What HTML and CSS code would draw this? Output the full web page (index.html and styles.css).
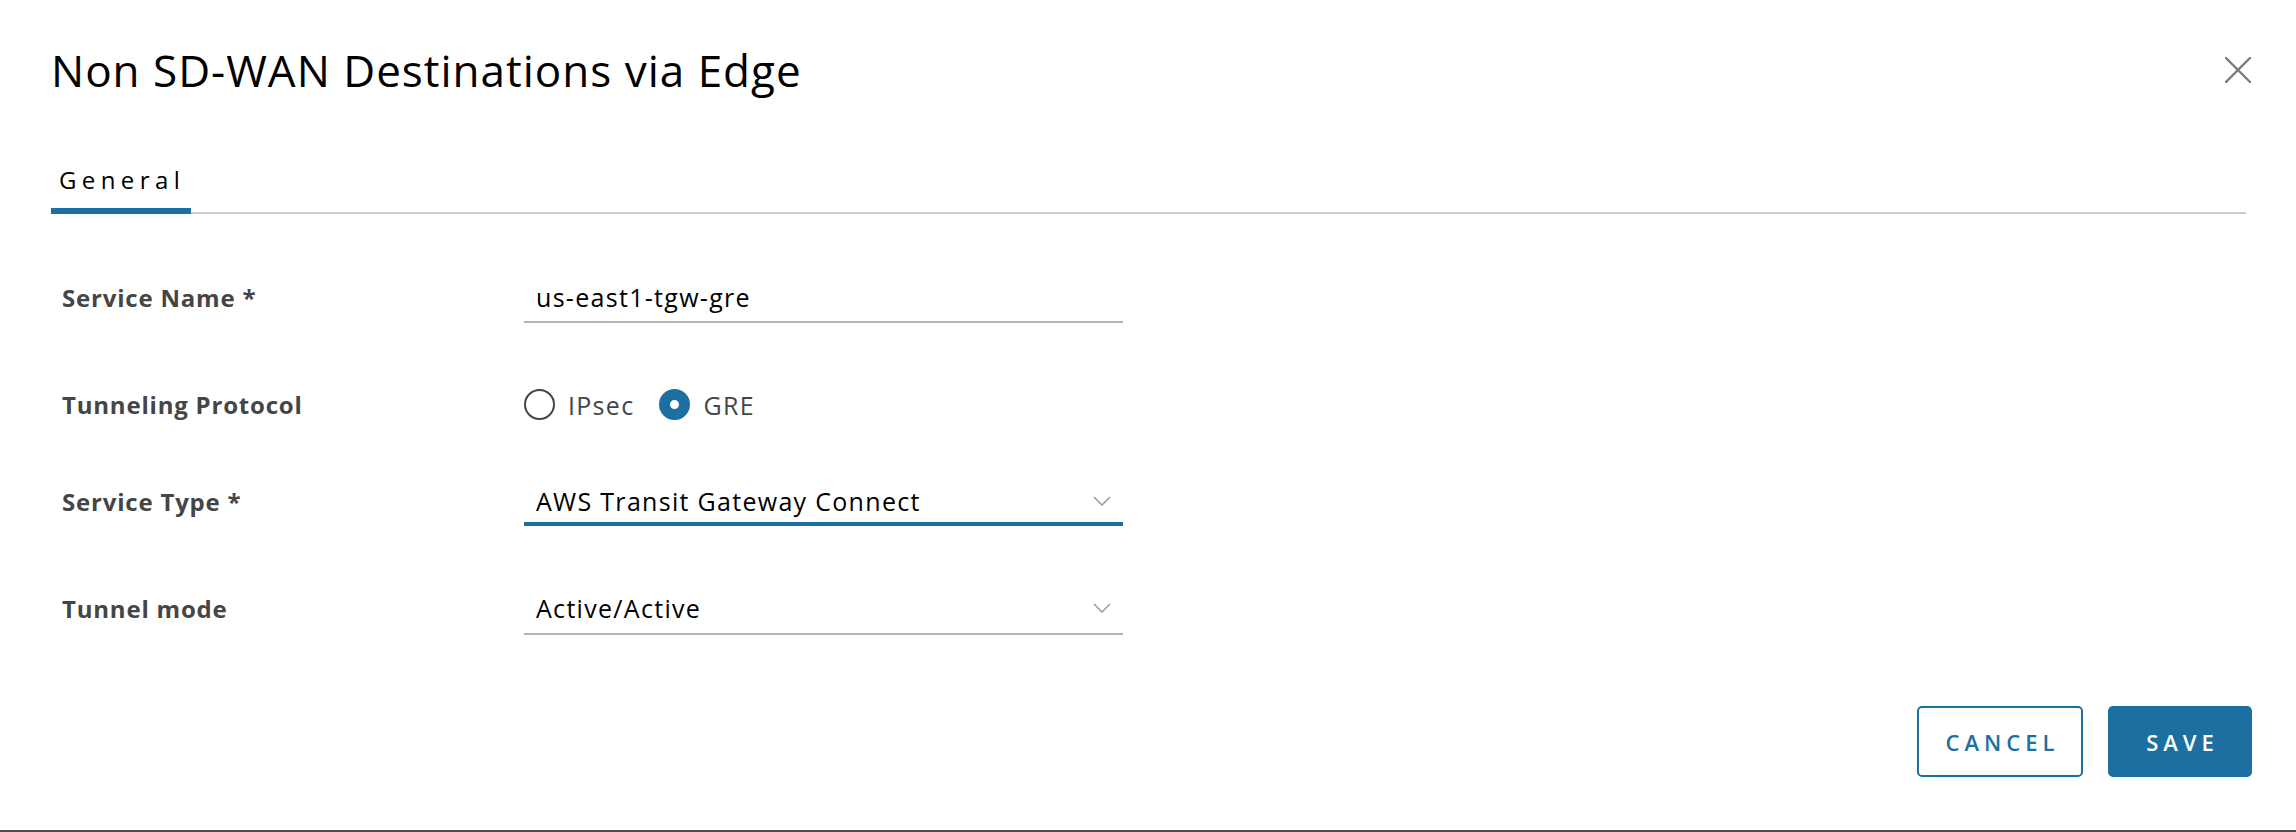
FILE: index.html
```html
<!DOCTYPE html>
<html lang="en">
<head>
<meta charset="utf-8">
<title>Non SD-WAN Destinations via Edge</title>
<link rel="stylesheet" href="styles.css">
</head>
<body>
<div class="page">
  <div class="modal">
    <header class="modal-header">
      <h1 class="title">Non SD-WAN Destinations via Edge</h1>
      <button class="close" type="button" aria-label="Close">
        <svg viewBox="0 0 26 26" width="26" height="26"><path d="M1 1 L25 25 M25 1 L1 25" stroke="#7d7d7d" stroke-width="2.4" fill="none" stroke-linecap="square"/></svg>
      </button>
    </header>
    <nav class="tabs">
      <div class="tab active">General</div>
    </nav>
    <div class="form">
      <div class="row">
        <div class="label">Service Name *</div>
        <div class="field input-field"><span class="value">us-east1-tgw-gre</span></div>
      </div>
      <div class="row row-center">
        <div class="label">Tunneling Protocol</div>
        <div class="radios">
          <span class="radio"></span><span class="radio-label">IPsec</span>
          <span class="radio checked"></span><span class="radio-label">GRE</span>
        </div>
      </div>
      <div class="row">
        <div class="label">Service Type *</div>
        <div class="field select-field focused"><span class="value">AWS Transit Gateway Connect</span>
          <svg class="chevron" viewBox="0 0 18 10" width="18" height="10"><polyline points="1,1 9,9 17,1" fill="none" stroke="#9a9a9a" stroke-width="1.5"/></svg>
        </div>
      </div>
      <div class="row row-last">
        <div class="label">Tunnel mode</div>
        <div class="field select-field"><span class="value">Active/Active</span>
          <svg class="chevron" viewBox="0 0 18 10" width="18" height="10"><polyline points="1,1 9,9 17,1" fill="none" stroke="#9a9a9a" stroke-width="1.5"/></svg>
        </div>
      </div>
    </div>
    <footer class="footer">
      <button class="btn btn-outline" type="button">CANCEL</button>
      <button class="btn btn-primary" type="button">SAVE</button>
    </footer>
  </div>
</div>
</body>
</html>
```
FILE: styles.css
```css
* { box-sizing: border-box; }
html, body { margin: 0; padding: 0; background: #fff; }
body { font-family: "Open Sans", "Liberation Sans", sans-serif; color: #000; }

.page {
  width: 2296px;
  height: 832px;
  border-bottom: 2px solid #505050;
  overflow: hidden;
}

.modal {
  padding: 40px 50px 0 51px;
}

.modal-header {
  display: flex;
  align-items: center;
  justify-content: space-between;
  height: 60px;
  margin-right: -5px;
}

.title {
  margin: 0;
  font-size: 44px;
  font-weight: 400;
  letter-spacing: 1px;
  line-height: 60px;
  color: #000;
}

.close {
  border: 0;
  background: none;
  padding: 0;
  width: 26px;
  height: 26px;
  display: flex;
}

.tabs {
  margin-top: 50px;
  display: flex;
  box-shadow: inset 0 -2px 0 #cccccc;
}

.tab {
  padding: 15px 6px 13px 8px;
  font-size: 24px;
  line-height: 30px;
  letter-spacing: 5.4px;
  border-bottom: 6px solid #1c70a1;
  color: #000;
}

.form {
  margin-top: 68px;
  padding-left: 11px;
  display: flex;
  flex-direction: column;
  gap: 68px;
}

.row {
  display: flex;
  align-items: baseline;
}

.row-center { align-items: center; margin-top: -2px; margin-bottom: -2px; }
.row-last { margin-top: -1px; }

.label {
  width: 462px;
  flex: none;
  font-size: 24px;
  font-weight: 700;
  letter-spacing: 0.8px;
  line-height: 30px;
  color: #454545;
}

.field {
  width: 599px;
  display: flex;
  align-items: center;
  justify-content: space-between;
  padding-left: 12px;
  padding-right: 12px;
  font-size: 25px;
  letter-spacing: 1.3px;
  line-height: 30px;
  color: #000;
  border-bottom: 2px solid #b3b3b3;
}

.input-field { padding-bottom: 9px; }
.select-field { padding-bottom: 10px; }
.select-field.focused { padding-bottom: 6px; border-bottom: 4px solid #1c70a1; }

.chevron { display: block; }

.radios {
  display: flex;
  align-items: center;
  height: 31px;
  font-size: 25px;
  letter-spacing: 1.3px;
  line-height: 30px;
  color: #454545;
}

.radio {
  width: 31px;
  height: 31px;
  border-radius: 50%;
  border: 2px solid #454545;
  flex: none;
}

.radio.checked {
  border: 11.5px solid #1c70a1;
  background: #fff;
}

.radio-label { margin-left: 13px; margin-right: 25px; }

.footer {
  margin-top: 71px;
  margin-right: -6px;
  display: flex;
  justify-content: flex-end;
  gap: 25px;
}

.btn {
  height: 71px;
  border-radius: 5px;
  font-family: "Open Sans", "Liberation Sans", sans-serif;
  font-size: 22px;
  font-weight: 600;
  letter-spacing: 5px;
  padding: 0 0 0 5px;
  cursor: pointer;
}

.btn-outline {
  width: 166px;
  background: #fff;
  color: #1c70a1;
  border: 2px solid #1c70a1;
}

.btn-primary {
  width: 144px;
  background: #1c70a1;
  color: #fff;
  border: 2px solid #1c70a1;
}
```
